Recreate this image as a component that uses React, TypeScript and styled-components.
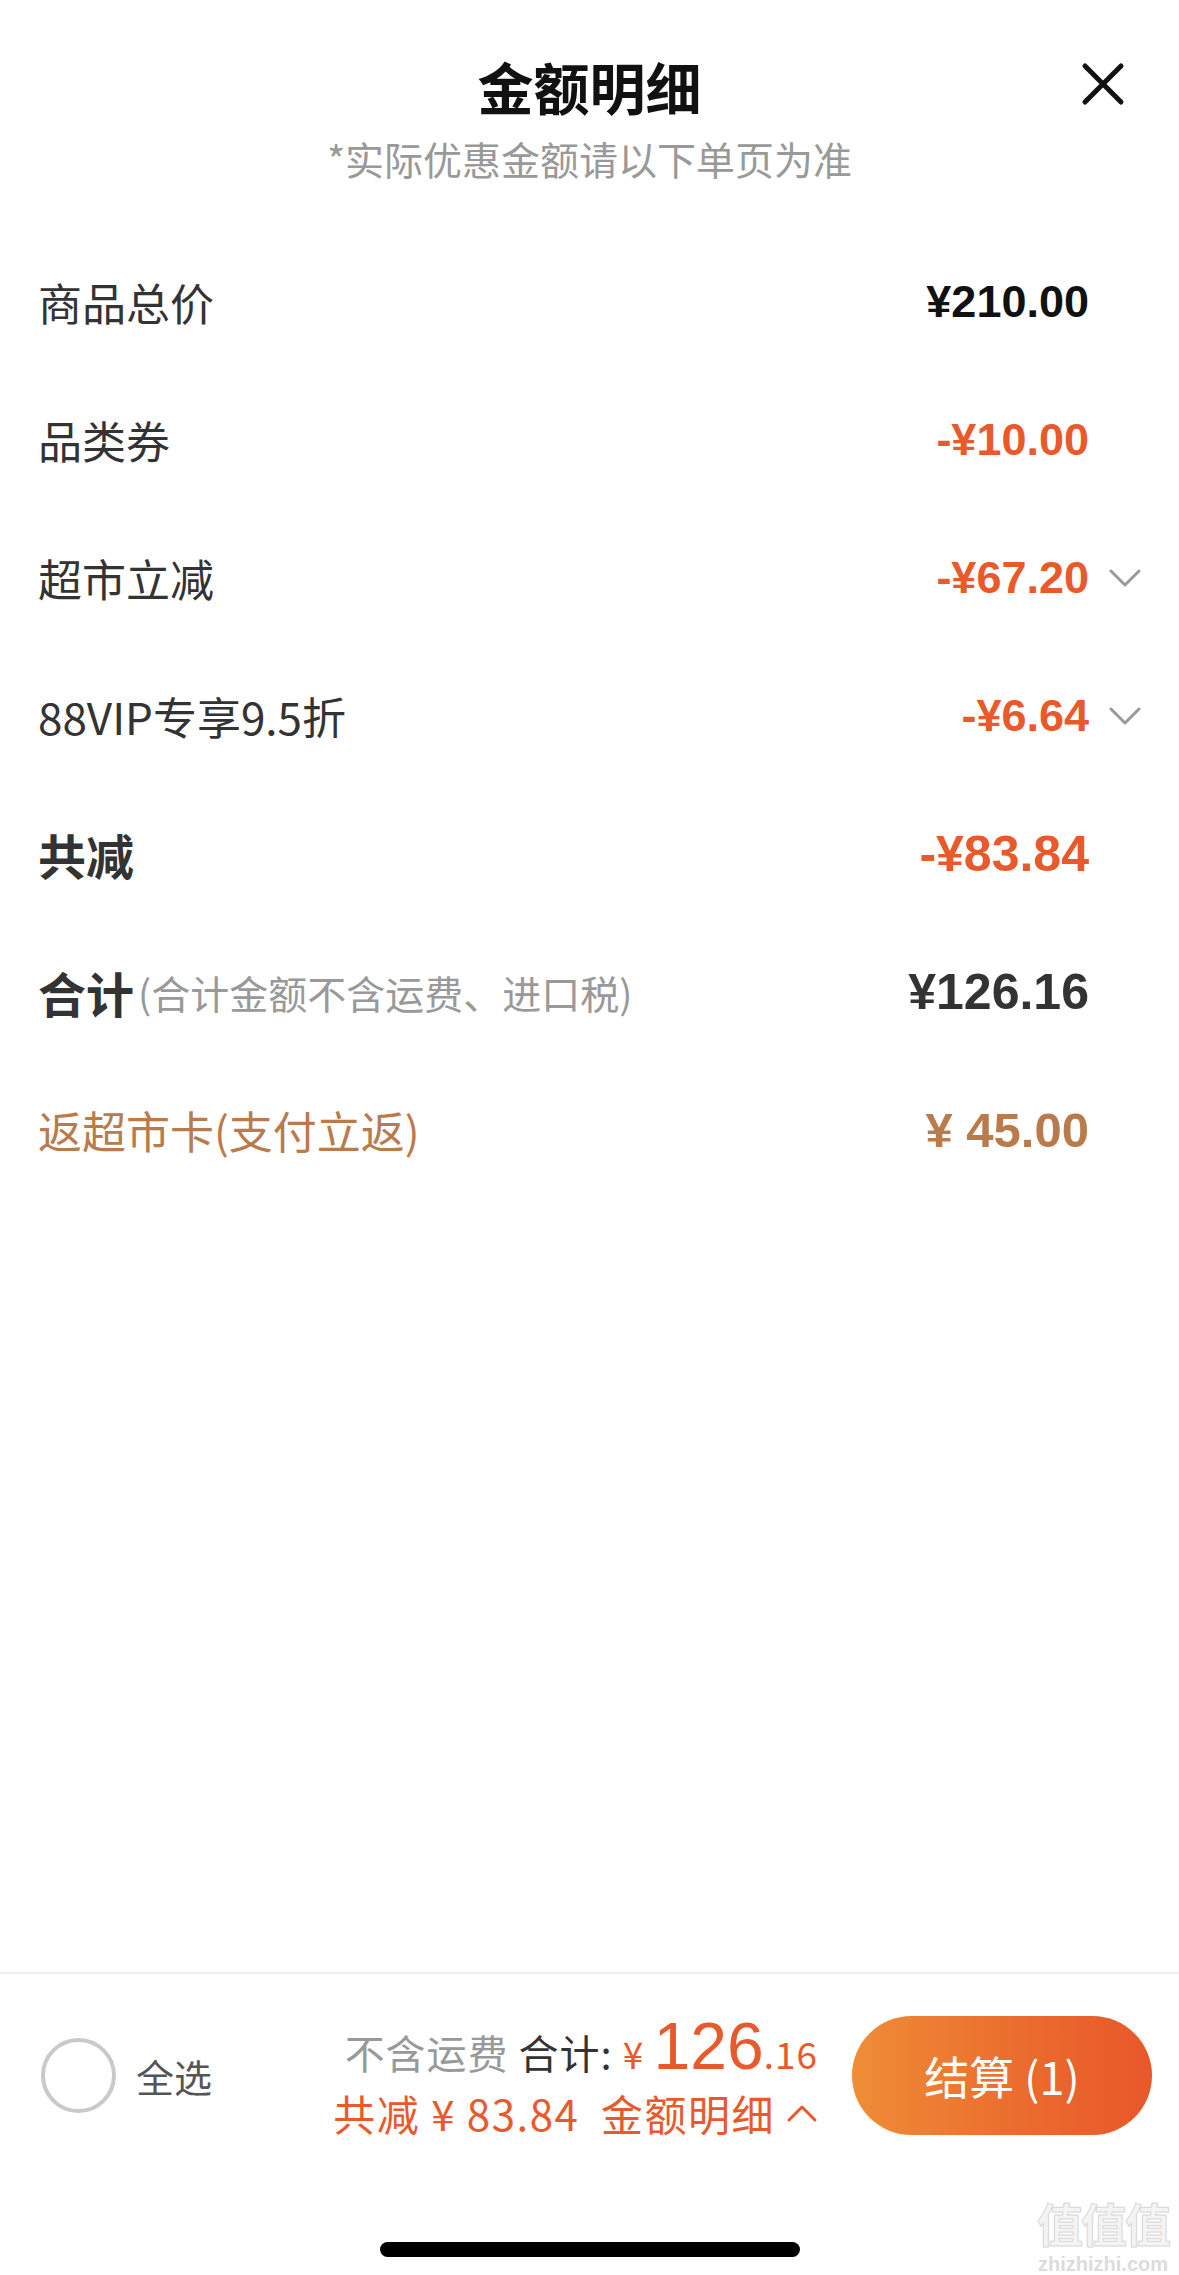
import React from "react";
import styled, { createGlobalStyle } from "styled-components";

const GlobalStyle = createGlobalStyle`
  html, body {
    margin: 0;
    padding: 0;
    background: #fff;
  }
  body {
    font-family: "Liberation Sans", "Noto Sans CJK SC", sans-serif;
  }
`;

const ORANGE = "#e85a2b";
const BROWN = "#b97b4b";

const Page = styled.div`
  position: relative;
  width: 1179px;
  min-height: 2275px;
  display: flex;
  flex-direction: column;
  background: #fff;
`;

const Header = styled.div`
  position: relative;
  height: 233px;
  display: flex;
  flex-direction: column;
  align-items: center;
  padding-top: 52px;
  box-sizing: border-box;
`;

const Title = styled.div`
  font-family: "Noto Sans CJK SC", sans-serif;
  font-size: 56px;
  font-weight: 700;
  line-height: 68px;
  color: #111;
`;

const Subtitle = styled.div`
  font-family: "Noto Sans CJK SC", sans-serif;
  font-size: 39px;
  line-height: 48px;
  margin-top: 14px;
  color: #999;
`;

const CloseButton = styled.button`
  position: absolute;
  top: 62px;
  right: 54px;
  width: 44px;
  height: 44px;
  padding: 0;
  border: none;
  background: none;
  display: flex;
  align-items: center;
  justify-content: center;
`;

const List = styled.div`
  display: flex;
  flex-direction: column;
`;

const Row = styled.div`
  height: 138px;
  display: flex;
  align-items: center;
  padding: 0 38px 0 38px;
`;

const Label = styled.div<{ $bold?: boolean; $color?: string }>`
  font-family: "Noto Sans CJK SC", sans-serif;
  font-size: ${(p) => (p.$bold ? "48px" : "44px")};
  font-weight: ${(p) => (p.$bold ? 700 : 400)};
  color: ${(p) => p.$color || "#333"};
  display: flex;
  align-items: center;
  white-space: nowrap;
`;

const Note = styled.span`
  font-size: 39px;
  font-weight: 400;
  color: #999;
  margin-left: 4px;
`;

const Spacer = styled.div`
  flex: 1;
`;

const Value = styled.div<{ $color?: string; $size?: number }>`
  font-family: "Liberation Sans", "Noto Sans CJK SC", sans-serif;
  font-size: ${(p) => p.$size || 45}px;
  font-weight: 700;
  color: ${(p) => p.$color || "#111"};
  white-space: pre;
`;

const ChevronSlot = styled.div`
  width: 32px;
  margin-left: 20px;
  display: flex;
  align-items: center;
  justify-content: center;
`;

const Footer = styled.div`
  margin-top: auto;
  border-top: 2px solid #ececec;
  height: 303px;
  box-sizing: border-box;
  display: flex;
  flex-direction: column;
`;

const Bar = styled.div`
  display: flex;
  align-items: center;
  padding: 39px 27px 0 41px;
`;

const Check = styled.div`
  width: 75px;
  height: 75px;
  box-sizing: border-box;
  border: 4px solid #c9c9c9;
  border-radius: 50%;
`;

const CheckLabel = styled.div`
  font-family: "Noto Sans CJK SC", sans-serif;
  font-size: 38px;
  color: #555;
  margin-left: 20px;
`;

const Summary = styled.div`
  flex: 1;
  display: flex;
  flex-direction: column;
  align-items: flex-end;
  margin-right: 34px;
`;

const SumLine = styled.div`
  display: flex;
  align-items: baseline;
  font-family: "Liberation Sans", "Noto Sans CJK SC", sans-serif;
  white-space: pre;
  line-height: 66px;
`;

const Piece = styled.span<{ $color: string; $size: number }>`
  color: ${(p) => p.$color};
  font-size: ${(p) => p.$size}px;
  letter-spacing: ${(p) => (p.$size > 50 ? "0" : "1px")};
  font-family: ${(p) =>
    p.$size > 50 ? `"Liberation Sans", sans-serif` : `"Noto Sans CJK SC", "Liberation Sans", sans-serif`};
`;

const SaveLine = styled.div`
  display: flex;
  align-items: center;
  font-family: "Noto Sans CJK SC", "Liberation Sans", sans-serif;
  font-size: 42px;
  letter-spacing: 1.5px;
  line-height: 50px;
  color: ${ORANGE};
  white-space: pre;
  margin-top: 2px;
`;

const PayButton = styled.button`
  width: 300px;
  height: 119px;
  border: none;
  border-radius: 60px;
  background: linear-gradient(90deg, #ef8d36 0%, #ea6a2d 60%, #e8572a 100%);
  color: #fff;
  font-family: "Noto Sans CJK SC", "Liberation Sans", sans-serif;
  font-size: 45px;
  display: flex;
  align-items: center;
  justify-content: center;
`;

const HomeIndicator = styled.div`
  width: 420px;
  height: 15px;
  border-radius: 8px;
  background: #000;
  margin: 104px auto 0;
`;

const Watermark = styled.div`
  position: absolute;
  right: 10px;
  bottom: 0;
  display: flex;
  flex-direction: column;
  align-items: center;
  gap: 8px;
  font-family: "Noto Sans CJK SC", sans-serif;
  pointer-events: none;
`;

const MarkGlyphs = styled.div`
  font-size: 46px;
  font-weight: 700;
  line-height: 46px;
  letter-spacing: -2px;
  -webkit-text-stroke: 1px #d8d8d8;
  color: #f4f4f4;
`;

const MarkSite = styled.div`
  font-family: "Liberation Sans", sans-serif;
  font-size: 20px;
  line-height: 22px;
  font-weight: 700;
  color: #dcdcdc;
`;

const Chevron = ({ up }: { up?: boolean }) => (
  <svg width="32" height="20" viewBox="0 0 32 20">
    <path
      d={up ? "M3 17 L16 4 L29 17" : "M2 3 L16 17 L30 3"}
      fill="none"
      stroke={up ? ORANGE : "#9a9a9a"}
      strokeWidth="3"
      strokeLinecap="round"
      strokeLinejoin="round"
    />
  </svg>
);

interface Item {
  label: string;
  value: string;
  color?: string;
  size?: number;
  bold?: boolean;
  labelColor?: string;
  note?: string;
  chevron?: boolean;
}

const items: Item[] = [
  { label: "商品总价", value: "¥210.00" },
  { label: "品类券", value: "-¥10.00", color: ORANGE },
  { label: "超市立减", value: "-¥67.20", color: ORANGE, chevron: true },
  { label: "88VIP专享9.5折", value: "-¥6.64", color: ORANGE, chevron: true },
  { label: "共减", value: "-¥83.84", color: ORANGE, size: 50, bold: true },
  { label: "合计", value: "¥126.16", color: "#333", size: 50, bold: true, note: "(合计金额不含运费、进口税)" },
  { label: "返超市卡(支付立返)", value: "¥ 45.00", color: BROWN, size: 49, labelColor: BROWN },
];

const App: React.FC = () => {
  return (
    <Page>
      <GlobalStyle />
      <Header>
        <Title>金额明细</Title>
        <Subtitle>*实际优惠金额请以下单页为准</Subtitle>
        <CloseButton>
          <svg width="44" height="44" viewBox="0 0 44 44">
            <path d="M4 4 L40 40 M40 4 L4 40" stroke="#111" strokeWidth="5" strokeLinecap="round" />
          </svg>
        </CloseButton>
      </Header>

      <List>
        {items.map((it, i) => (
          <Row key={i}>
            <Label $bold={it.bold} $color={it.labelColor}>
              {it.label}
              {it.note && <Note>{it.note}</Note>}
            </Label>
            <Spacer />
            <Value $color={it.color} $size={it.size}>
              {it.value}
            </Value>
            <ChevronSlot>{it.chevron && <Chevron />}</ChevronSlot>
          </Row>
        ))}
      </List>

      <Footer>
        <Bar>
          <Check />
          <CheckLabel>全选</CheckLabel>
          <Summary>
            <SumLine>
              <Piece $color="#999" $size={40}>不含运费 </Piece>
              <Piece $color="#333" $size={40}>合计: </Piece>
              <Piece $color={ORANGE} $size={37}>¥ </Piece>
              <Piece $color={ORANGE} $size={66}>126</Piece>
              <Piece $color={ORANGE} $size={37}>.16</Piece>
            </SumLine>
            <SaveLine>
              共减 ¥ 83.84  金额明细 <Chevron up />
            </SaveLine>
          </Summary>
          <PayButton>结算 (1)</PayButton>
        </Bar>
        <HomeIndicator />
      </Footer>

      <Watermark>
        <MarkGlyphs>值值值</MarkGlyphs>
        <MarkSite>zhizhizhi.com</MarkSite>
      </Watermark>
    </Page>
  );
};

export default App;
